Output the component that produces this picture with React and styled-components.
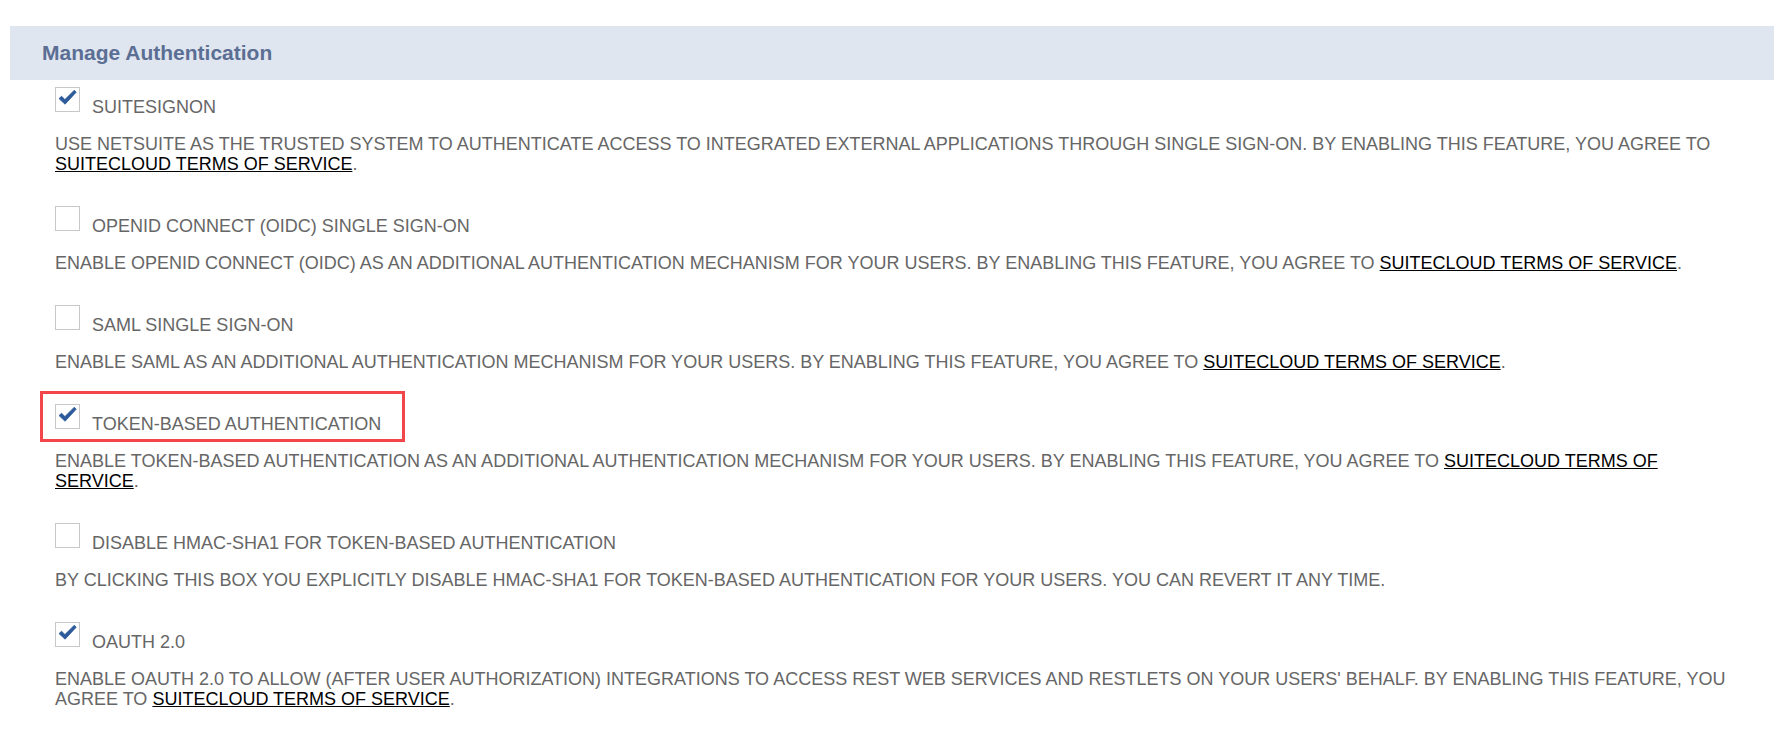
import React from "react";
import styled, { createGlobalStyle } from "styled-components";

const GlobalStyle = createGlobalStyle`
  body {
    margin: 0;
    background: #fff;
    font-family: "Liberation Sans", Arial, sans-serif;
  }
`;

const options = [
  {
    id: "ssos",
    label: "SUITESIGNON",
    checked: true,
    text: "USE NETSUITE AS THE TRUSTED SYSTEM TO AUTHENTICATE ACCESS TO INTEGRATED EXTERNAL APPLICATIONS THROUGH SINGLE SIGN-ON. BY ENABLING THIS FEATURE, YOU AGREE TO ",
    terms: true,
  },
  {
    id: "oidc",
    label: "OPENID CONNECT (OIDC) SINGLE SIGN-ON",
    checked: false,
    text: "ENABLE OPENID CONNECT (OIDC) AS AN ADDITIONAL AUTHENTICATION MECHANISM FOR YOUR USERS. BY ENABLING THIS FEATURE, YOU AGREE TO ",
    terms: true,
  },
  {
    id: "saml",
    label: "SAML SINGLE SIGN-ON",
    checked: false,
    text: "ENABLE SAML AS AN ADDITIONAL AUTHENTICATION MECHANISM FOR YOUR USERS. BY ENABLING THIS FEATURE, YOU AGREE TO ",
    terms: true,
  },
  {
    id: "tba",
    label: "TOKEN-BASED AUTHENTICATION",
    checked: true,
    highlight: true,
    text: "ENABLE TOKEN-BASED AUTHENTICATION AS AN ADDITIONAL AUTHENTICATION MECHANISM FOR YOUR USERS. BY ENABLING THIS FEATURE, YOU AGREE TO ",
    terms: true,
  },
  {
    id: "hmac",
    label: "DISABLE HMAC-SHA1 FOR TOKEN-BASED AUTHENTICATION",
    checked: false,
    text: "BY CLICKING THIS BOX YOU EXPLICITLY DISABLE HMAC-SHA1 FOR TOKEN-BASED AUTHENTICATION FOR YOUR USERS. YOU CAN REVERT IT ANY TIME.",
    terms: false,
  },
  {
    id: "oauth2",
    label: "OAUTH 2.0",
    checked: true,
    text: "ENABLE OAUTH 2.0 TO ALLOW (AFTER USER AUTHORIZATION) INTEGRATIONS TO ACCESS REST WEB SERVICES AND RESTLETS ON YOUR USERS' BEHALF. BY ENABLING THIS FEATURE, YOU AGREE TO ",
    terms: true,
  },
];

export default function App() {
  return (
    <>
      <GlobalStyle />
      <Page>
        <SectionHeader>Manage Authentication</SectionHeader>
        <List>
          {options.map((o) => (
            <Item key={o.id}>
              <OptionRow>
                <Box>
                  {o.checked && (
                    <svg width="23" height="23" viewBox="1 1 23 23">
                      <path
                        d="M4 11.6 L6.6 9.2 L9.9 12.6 L19.3 3.2 L21.2 5.2 L10.1 17.2 Z"
                        fill="#2c5a9a"
                        stroke="#2c5a9a"
                        strokeWidth="0.8"
                        strokeLinejoin="round"
                      />
                    </svg>
                  )}
                </Box>
                <Label>{o.label}</Label>
                {o.highlight && <Highlight />}
              </OptionRow>
              <Desc>
                {o.text}
                {o.terms && (
                  <>
                    <TermsLink href="#">SUITECLOUD TERMS OF SERVICE</TermsLink>.
                  </>
                )}
              </Desc>
            </Item>
          ))}
        </List>
      </Page>
    </>
  );
}

const Page = styled.div`
  padding: 26px 15px 0 10px;
`;

const SectionHeader = styled.div`
  height: 54px;
  display: flex;
  align-items: center;
  padding-left: 32px;
  background: #e0e6ef;
  color: #5b6e94;
  font-size: 21px;
  font-weight: bold;
`;

const List = styled.div`
  display: flex;
  flex-direction: column;
  gap: 32px;
  padding: 7px 0 0 45px;
`;

const Item = styled.div`
  display: flex;
  flex-direction: column;
`;

const OptionRow = styled.div`
  position: relative;
  display: flex;
  align-items: flex-end;
  gap: 12px;
`;

const Box = styled.div`
  width: 25px;
  height: 25px;
  box-sizing: border-box;
  border: 1px solid #c8c8c8;
  background: #fff;
  flex-shrink: 0;
  svg {
    display: block;
  }
`;

const Label = styled.span`
  font-size: 18px;
  line-height: 20px;
  color: #666;
  margin-bottom: -5px;
`;

const Highlight = styled.div`
  position: absolute;
  left: -15px;
  top: -13px;
  width: 365px;
  height: 51px;
  box-sizing: border-box;
  border: 3px solid #f2464b;
  pointer-events: none;
`;

const Desc = styled.p`
  margin: 22px 0 0;
  max-width: 1690px;
  font-size: 18px;
  line-height: 20px;
  color: #666;
`;

const TermsLink = styled.a`
  color: #000;
  text-decoration: underline;
`;
